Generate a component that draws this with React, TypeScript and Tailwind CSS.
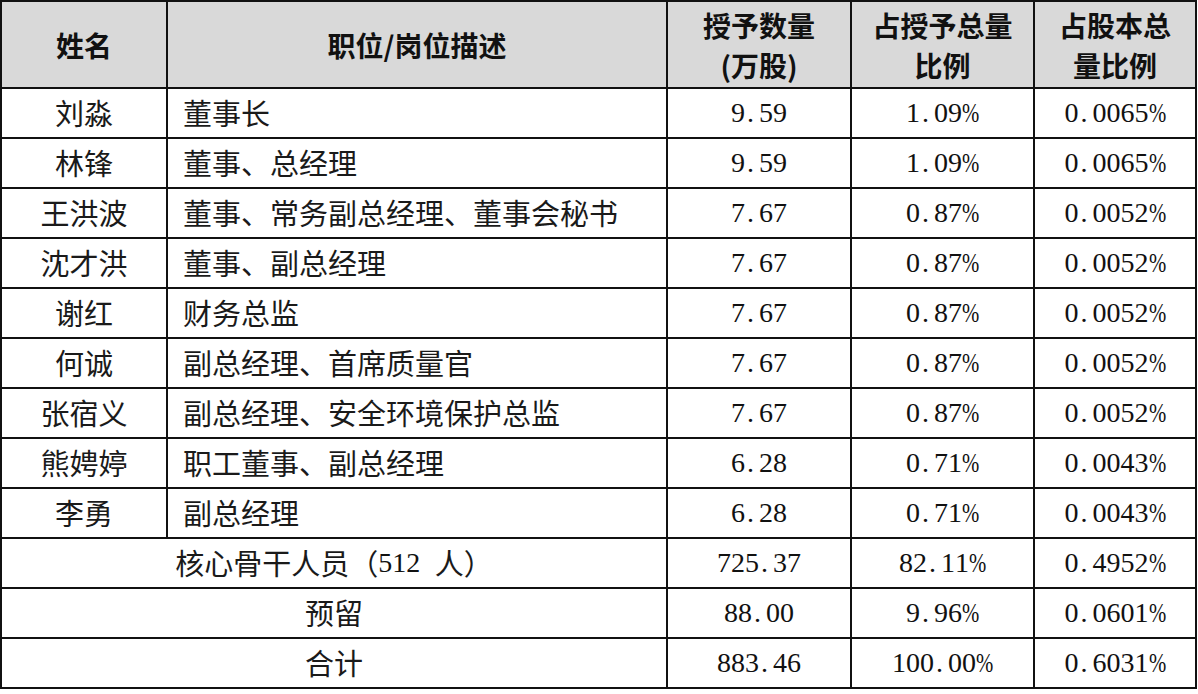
import React from "react";

const rows: [string, string, string, string, string][] = [
  ["刘淼", "董事长", "9.59", "1.09%", "0.0065%"],
  ["林锋", "董事、总经理", "9.59", "1.09%", "0.0065%"],
  ["王洪波", "董事、常务副总经理、董事会秘书", "7.67", "0.87%", "0.0052%"],
  ["沈才洪", "董事、副总经理", "7.67", "0.87%", "0.0052%"],
  ["谢红", "财务总监", "7.67", "0.87%", "0.0052%"],
  ["何诚", "副总经理、首席质量官", "7.67", "0.87%", "0.0052%"],
  ["张宿义", "副总经理、安全环境保护总监", "7.67", "0.87%", "0.0052%"],
  ["熊娉婷", "职工董事、副总经理", "6.28", "0.71%", "0.0043%"],
  ["李勇", "副总经理", "6.28", "0.71%", "0.0043%"],
];

const spanRows: [string, string, string, string][] = [
  ["核心骨干人员（512 人）", "725.37", "82.11%", "0.4952%"],
  ["预留", "88.00", "9.96%", "0.0601%"],
  ["合计", "883.46", "100.00%", "0.6031%"],
];

function Num({ v }: { v: string }) {
  return (
    <span className="inline-flex items-baseline font-['Liberation_Serif',serif] text-[28px] text-[#111]">
      {v.split("").map((c, i) => {
        if (c === ".")
          return (
            <span key={i} className="inline-block w-[14px] pl-[2px] text-left">
              .
            </span>
          );
        if (c === "%")
          return (
            <span key={i} className="inline-block w-[17px] text-center">
              <span className="inline-block scale-x-[0.74] origin-left">%</span>
            </span>
          );
        return (
          <span key={i} className="inline-block w-[14px] text-center">
            {c}
          </span>
        );
      })}
    </span>
  );
}

function Mixed({ t }: { t: string }) {
  const parts = t.split(/(\d+)/);
  return (
    <span className="inline-flex items-center">
      {parts.map((p, i) =>
        /^\d+$/.test(p) ? <Num key={i} v={p} /> : <span key={i}>{p.replace(" ", "\u2002")}</span>
      )}
    </span>
  );
}

const cjk = "font-['Noto_Sans_CJK_SC',sans-serif]";

export default function App() {
  const head = "bg-[#d9d9d9] flex items-center justify-center text-center font-bold text-[28px] leading-[40px] text-[#111]";
  const cell = "bg-white flex items-center text-[29px] text-[#1a1a1a]";
  return (
    <div className={`w-[1198px] h-[694px] bg-white ${cjk}`}>
      <div className="grid grid-cols-[164px_498px_182px_181px_160px] grid-rows-[85px_repeat(12,48px)] gap-[2px] bg-[#111] p-[2px] w-[1197px]">
        <div className={head}>姓名</div>
        <div className={head}>职位/岗位描述</div>
        <div className={head}>
          授予数量
          <br />
          (万股)
        </div>
        <div className={head}>
          占授予总量
          <br />
          比例
        </div>
        <div className={head}>
          占股本总
          <br />
          量比例
        </div>
        {rows.map((r, i) => (
          <React.Fragment key={i}>
            <div className={`${cell} justify-center`}>{r[0]}</div>
            <div className={`${cell} pl-[15px]`}>{r[1]}</div>
            <div className={`${cell} justify-center`}>
              <Num v={r[2]} />
            </div>
            <div className={`${cell} justify-center`}>
              <Num v={r[3]} />
            </div>
            <div className={`${cell} justify-center`}>
              <Num v={r[4]} />
            </div>
          </React.Fragment>
        ))}
        {spanRows.map((r, i) => (
          <React.Fragment key={i}>
            <div className={`${cell} col-span-2 justify-center`}>
              <Mixed t={r[0]} />
            </div>
            <div className={`${cell} justify-center`}>
              <Num v={r[1]} />
            </div>
            <div className={`${cell} justify-center`}>
              <Num v={r[2]} />
            </div>
            <div className={`${cell} justify-center`}>
              <Num v={r[3]} />
            </div>
          </React.Fragment>
        ))}
      </div>
    </div>
  );
}
